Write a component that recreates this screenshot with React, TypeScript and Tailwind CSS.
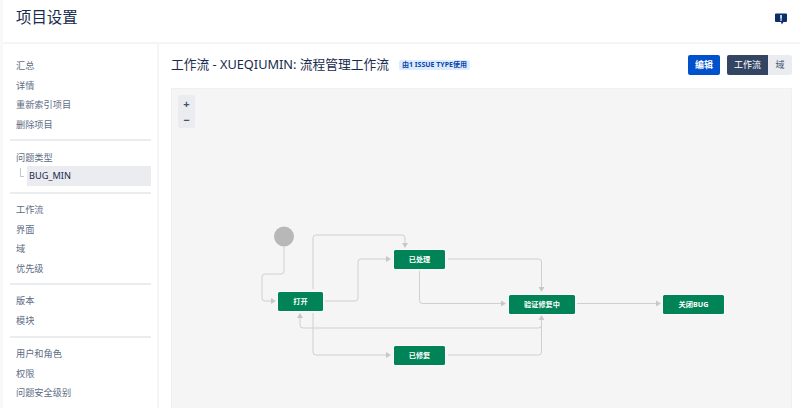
const FONT = "font-['Noto_Sans','Noto_Sans_CJK_SC',sans-serif]";

function Row({ label }: { label: string }) {
  return <div className="h-[19.5px] pl-[6px] text-[9.2px] leading-[17.5px] text-[#5e6c84]">{label}</div>;
}

function Divider({ className }: { className: string }) {
  return <div className={`h-[2px] bg-[#ebecf0] ${className}`} />;
}

function Sidebar() {
  return (
    <aside className="w-[156px] shrink-0 border-r-2 border-[#f4f5f7] pl-[7px] pr-[6px] pt-[13px]">
      {["汇总", "详情", "重新索引项目", "删除项目"].map((t) => <Row key={t} label={t} />)}
      <Divider className="mt-[4px] mb-[8px]" />
      <Row label="问题类型" />
      <div className="relative ml-[17px] mt-[-2.5px] h-[20px] bg-[#ebecf0] pl-[2px] text-[9.2px] leading-[20px] text-[#172b4d]">
        BUG_MIN
        <span className="absolute left-[-7px] top-[2px] h-[9px] w-[4px] border-b border-l border-[#c1c7d0]" />
      </div>
      <Divider className="mt-[6px] mb-[7px]" />
      {["工作流", "界面", "域", "优先级"].map((t) => <Row key={t} label={t} />)}
      <Divider className="mt-[4px] mb-[7px]" />
      {["版本", "模块"].map((t) => <Row key={t} label={t} />)}
      <Divider className="mt-[5px] mb-[7px]" />
      {["用户和角色", "权限", "问题安全级别", "通知"].map((t) => <Row key={t} label={t} />)}
    </aside>
  );
}

function Status({ label, x, y, w }: { label: string; x: number; y: number; w: number }) {
  return (
    <div
      className="absolute flex h-[18.5px] items-center justify-center rounded-[1.5px] bg-[#008457] text-[7.2px] font-bold text-white ring-1 ring-white/70"
      style={{ left: x, top: y, width: w }}
    >
      {label}
    </div>
  );
}

function Diagram() {
  const ox = 171;
  const oy = 88;
  const lines = [
    "M284 247 V271 Q284 274 281 274 H265 Q262 274 262 277 V298 Q262 301 265 301 H271",
    "M313 289 V238 Q313 235 316 235 H402 Q405 235 405 238 V243",
    "M325 301 H355 Q358 301 358 298 V262 Q358 259 361 259 H386",
    "M419.5 271 V300.5 Q419.5 303.5 422.5 303.5 H501",
    "M448 259 H538.5 Q541.5 259 541.5 262 V287",
    "M577 303.5 H656",
    "M313 313 V352 Q313 355 316 355 H386",
    "M448 355 H538.5 Q541.5 355 541.5 352 V320",
    "M300 318 V325 Q300 328 303 328 H538.5 Q541.5 328 541.5 325 V320",
  ];
  const heads = [
    "271,298 276,301 271,304",
    "402,243 405,248 408,243",
    "386,256 391,259 386,262",
    "501,300.5 506,303.5 501,306.5",
    "538.5,287 541.5,292 544.5,287",
    "656,300.5 661,303.5 656,306.5",
    "386,352 391,355 386,358",
    "538.5,320 541.5,315 544.5,320",
    "297,318 300,313 303,318",
  ];
  return (
    <div className="relative mt-[13px] h-[325px] w-[621px] border border-[#f0f0f0] bg-[#f5f5f5]">
      <div className="absolute left-[6px] top-[6px] flex h-[33px] w-[17px] flex-col items-center rounded-[2px] bg-[#ebecf0] pt-[1px] text-[11px] font-bold leading-[16px] text-[#42526e]">
        <span>+</span>
        <span>−</span>
      </div>
      <svg className="absolute left-[-1px] top-[-1px]" width="621" height="320" viewBox={`${ox} ${oy} 621 320`}>
        <circle cx="284" cy="236.5" r="10" fill="#b8b8b8" />
        {lines.map((d) => <path key={d} d={d} fill="none" stroke="#cfcfcf" strokeWidth="1" />)}
        {heads.map((p) => <polygon key={p} points={p} fill="#c8c8c8" />)}
      </svg>
      <Status label="打开" x={278 - ox - 1} y={292 - oy - 1} w={45} />
      <Status label="已处理" x={394 - ox - 1} y={250 - oy - 1} w={51} />
      <Status label="已修复" x={394 - ox - 1} y={346 - oy - 1} w={51} />
      <Status label="验证修复中" x={509 - ox - 1} y={295 - oy - 1} w={66} />
      <Status label="关闭BUG" x={663 - ox - 1} y={295 - oy - 1} w={61} />
    </div>
  );
}

export default function App() {
  return (
    <div className={`${FONT} flex h-[408px] w-[800px] flex-col overflow-hidden border-l-[3px] border-[#f7f8f9] bg-white`}>
      <header className="flex h-[44px] shrink-0 items-center justify-between border-b-2 border-[#f4f5f7] pl-[13px] pr-[13px] pb-[6px]">
        <h1 className="text-[15.4px] font-normal text-[#172b4d]">项目设置</h1>
        <svg width="12" height="12" viewBox="0 0 12 12" className="mt-[1px]">
          <path d="M1 0.5 H11 Q12 0.5 12 1.5 V8 Q12 9 11 9 H8.5 L6.8 11.5 L6 9 H1 Q0 9 0 8 V1.5 Q0 0.5 1 0.5 Z" fill="#0a2f6b" />
          <rect x="5.3" y="2" width="1.5" height="3.8" fill="#fff" />
          <rect x="5.3" y="6.4" width="1.5" height="1.4" fill="#fff" />
        </svg>
      </header>
      <div className="flex min-h-0 flex-1">
        <Sidebar />
        <main className="flex-1 pl-[12px] pt-[11px]">
          <div className="flex h-[20px] w-[621px] items-center">
            <h2 className="text-[12.75px] font-normal whitespace-nowrap text-[#172b4d]">工作流 - XUEQIUMIN: 流程管理工作流</h2>
            <span className="ml-[10px] rounded-[2px] bg-[#deebff] px-[3px] text-[7px] leading-[10px] font-bold text-[#0747a6]">由1 ISSUE TYPE使用</span>
            <button className="ml-auto h-[20px] w-[32px] rounded-[2px] bg-[#0052cc] text-[9px] font-bold text-white">编辑</button>
            <div className="ml-[7px] flex h-[20px] text-[9px]">
              <span className="flex w-[41px] items-center justify-center rounded-l-[2px] bg-[#344563] text-white">工作流</span>
              <span className="flex w-[24px] items-center justify-center rounded-r-[2px] bg-[#ebecf0] text-[#42526e]">域</span>
            </div>
          </div>
          <Diagram />
        </main>
      </div>
    </div>
  );
}
